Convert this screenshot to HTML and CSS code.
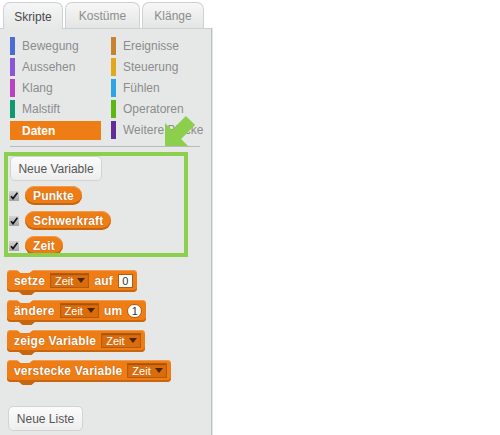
FILE: index.html
```html
<!DOCTYPE html>
<html lang="de">
<head>
<meta charset="utf-8">
<title>Skripte – Daten</title>
<link rel="stylesheet" href="styles.css">
</head>
<body>
<div class="palette">
  <div class="tabs">
    <div class="tab tab-active">Skripte</div>
    <div class="tab tab-kost">Kostüme</div>
    <div class="tab tab-klang">Klänge</div>
  </div>
  <div class="panel">
    <div class="cats">
      <div class="cat"><span class="bar c-motion"></span>Bewegung</div>
      <div class="cat"><span class="bar c-events"></span>Ereignisse</div>
      <div class="cat"><span class="bar c-looks"></span>Aussehen</div>
      <div class="cat"><span class="bar c-control"></span>Steuerung</div>
      <div class="cat"><span class="bar c-sound"></span>Klang</div>
      <div class="cat"><span class="bar c-sensing"></span>Fühlen</div>
      <div class="cat"><span class="bar c-pen"></span>Malstift</div>
      <div class="cat"><span class="bar c-ops"></span>Operatoren</div>
      <div class="cat cat-active">Daten</div>
      <div class="cat"><span class="bar c-more"></span>Weitere Blöcke</div>
    </div>
    <div class="sep"></div>
    <button class="btn btn-var">Neue Variable</button>
    <div class="vars">
      <div class="var-row">
        <span class="check"><svg width="10" height="10" viewBox="0 0 10 10"><path d="M2 5.2 L4 7.6 L8.4 1.8" fill="none" stroke="#111" stroke-width="1.6"/></svg></span>
        <span class="reporter">Punkte</span>
      </div>
      <div class="var-row">
        <span class="check"><svg width="10" height="10" viewBox="0 0 10 10"><path d="M2 5.2 L4 7.6 L8.4 1.8" fill="none" stroke="#111" stroke-width="1.6"/></svg></span>
        <span class="reporter">Schwerkraft</span>
      </div>
      <div class="var-row">
        <span class="check"><svg width="10" height="10" viewBox="0 0 10 10"><path d="M2 5.2 L4 7.6 L8.4 1.8" fill="none" stroke="#111" stroke-width="1.6"/></svg></span>
        <span class="reporter">Zeit</span>
      </div>
    </div>
    <div class="blocks">
      <div class="block"><span>setze</span><span class="dd">Zeit<i class="tri"></i></span><span>auf</span><span class="num">0</span></div>
      <div class="block"><span>ändere</span><span class="dd">Zeit<i class="tri"></i></span><span>um</span><span class="num num-round">1</span></div>
      <div class="block"><span>zeige Variable</span><span class="dd">Zeit<i class="tri"></i></span></div>
      <div class="block"><span>verstecke Variable</span><span class="dd">Zeit<i class="tri"></i></span></div>
    </div>
    <button class="btn btn-list">Neue Liste</button>
  </div>
  <div class="highlight"></div>
  <svg class="arrow" width="212" height="160" viewBox="0 0 212 160">
    <polygon points="165,146 165,123 171.9,129.9 185.9,115.9 195.1,125.1 181.1,139.1 188,146" fill="#8ccf4c"/>
  </svg>
</div>
</body>
</html>
```
FILE: styles.css
```css
html, body {
  margin: 0;
  padding: 0;
  background: #ffffff;
}
body {
  width: 500px;
  height: 435px;
  overflow: hidden;
  font-family: "Liberation Sans", Arial, sans-serif;
  font-size: 12px;
}
.palette {
  position: relative;
  width: 213px;
  height: 435px;
  display: flex;
  flex-direction: column;
}
.tabs {
  height: 28px;
  display: flex;
  align-items: flex-end;
  padding-left: 3px;
  gap: 2px;
  box-sizing: border-box;
}
.tab {
  height: 26px;
  box-sizing: border-box;
  border: 1px solid #cfd0d1;
  border-bottom: none;
  border-radius: 7px 7px 0 0;
  background: linear-gradient(#f7f7f7, #e4e5e5);
  color: #8d8d8d;
  display: flex;
  align-items: center;
  justify-content: center;
  padding-top: 1px;
}
.tab-active {
  width: 60px;
  color: #4a4a4a;
  background: linear-gradient(#f5f6f6, #e6e8e8);
  height: 27px;
  margin-bottom: -1px;
  position: relative;
  z-index: 1;
}
.tab-kost { width: 75px; }
.tab-klang { width: 62px; }
.panel {
  flex: 1;
  background: #e6e8e8;
  border-top: 1px solid #cfd0d1;
  border-right: 1px solid #bdbfc0;
  box-shadow: 1px 0 0 #e2e3e3;
  display: flex;
  flex-direction: column;
  align-items: flex-start;
  box-sizing: border-box;
  width: 212px;
}
.cats {
  margin: 8px 0 0 10px;
  display: grid;
  grid-template-columns: 91px 91px;
  grid-auto-rows: 18px;
  column-gap: 10px;
  row-gap: 3px;
}
.cat {
  display: flex;
  align-items: center;
  color: #8c8c8c;
  white-space: nowrap;
  font-size: 12px;
}
.bar {
  width: 5px;
  height: 18px;
  margin-right: 7px;
  flex: none;
}
.c-motion { background: #4a6cd4; }
.c-events { background: #c88330; }
.c-looks { background: #8a55d7; }
.c-control { background: #e1a91a; }
.c-sound { background: #bb42c3; }
.c-sensing { background: #2ca5e2; }
.c-pen { background: #0e9a6c; }
.c-ops { background: #5cb712; }
.c-more { background: #632d99; }
.cat-active {
  background: #ee7d16;
  color: #ffffff;
  font-weight: bold;
  padding-left: 12px;
  height: 19px;
}
.sep {
  margin: 7px 0 0 10px;
  width: 190px;
  height: 1px;
  background: #b9bbbb;
}
.btn {
  font-family: "Liberation Sans", Arial, sans-serif;
  font-size: 12px;
  color: #555555;
  background: linear-gradient(#fbfbfb, #eeeeee);
  border: 1px solid #d2d3d3;
  border-radius: 5px;
  padding: 0;
  box-sizing: border-box;
}
.btn-var {
  margin: 9px 0 0 10px;
  width: 92px;
  height: 25px;
}
.vars {
  margin: 5px 0 0 9px;
  display: flex;
  flex-direction: column;
  gap: 6px;
}
.var-row {
  display: flex;
  align-items: center;
  gap: 6px;
  height: 19px;
}
.check {
  width: 10px;
  height: 10px;
  box-sizing: border-box;
  background: linear-gradient(#d4d4d4, #a4a4a4);
  display: block;
  line-height: 0;
}
.reporter {
  height: 19px;
  box-sizing: border-box;
  padding: 0 8px;
  border-radius: 10px;
  background: #ee7d16;
  box-shadow: inset 0 -2px 0 #c8660f, inset 0 1px 0 #f39b4c;
  color: #ffffff;
  font-weight: bold;
  letter-spacing: 0.15px;
  display: flex;
  align-items: center;
  text-shadow: 0 0 1px rgba(120, 50, 0, 0.6);
}
.blocks {
  margin: 15px 0 0 7px;
  display: flex;
  flex-direction: column;
  align-items: flex-start;
  gap: 8px;
}
.block {
  position: relative;
  height: 22px;
  box-sizing: border-box;
  display: flex;
  align-items: center;
  gap: 5px;
  padding: 0 4px 1px 7px;
  background: #ee7d16;
  border-radius: 4px;
  box-shadow: inset 0 -2px 0 #c8660f, inset 0 1px 0 #f39b4c;
  color: #ffffff;
  font-weight: bold;
  letter-spacing: 0.2px;
  white-space: nowrap;
  text-shadow: 0 0 1px rgba(120, 50, 0, 0.6);
}
.block::before {
  content: "";
  position: absolute;
  top: 0;
  left: 10px;
  width: 16px;
  height: 3px;
  background: #e6e8e8;
  clip-path: polygon(0 0, 100% 0, 78% 100%, 22% 100%);
}
.block::after {
  content: "";
  position: absolute;
  top: 100%;
  left: 12px;
  width: 16px;
  height: 3px;
  background: #c8660f;
  clip-path: polygon(0 0, 100% 0, 78% 100%, 22% 100%);
}
.dd {
  height: 15px;
  box-sizing: border-box;
  display: flex;
  align-items: center;
  gap: 4px;
  padding: 0 3px 0 4px;
  background: #d96c0d;
  border: 1px solid #b65a0b;
  box-shadow: inset 0 1px 1px rgba(0, 0, 0, 0.25);
  font-weight: normal;
  font-size: 11px;
  letter-spacing: 0;
  text-shadow: none;
}
.tri {
  width: 0;
  height: 0;
  border-left: 4px solid transparent;
  border-right: 4px solid transparent;
  border-top: 5px solid #4c2400;
}
.num {
  height: 14px;
  min-width: 15px;
  box-sizing: border-box;
  background: #ffffff;
  border: 1px solid #b65a0b;
  color: #333333;
  font-weight: normal;
  font-size: 11px;
  text-shadow: none;
  display: flex;
  align-items: center;
  justify-content: center;
}
.num-round {
  border-radius: 7px;
}
.btn-list {
  margin: 24px 0 0 8px;
  width: 75px;
  height: 25px;
}
.highlight {
  position: absolute;
  left: 4px;
  top: 152px;
  width: 184px;
  height: 105px;
  box-sizing: border-box;
  border: 4px solid #8ccf4c;
  pointer-events: none;
}
.arrow {
  position: absolute;
  left: 0;
  top: 0;
  pointer-events: none;
}
```
